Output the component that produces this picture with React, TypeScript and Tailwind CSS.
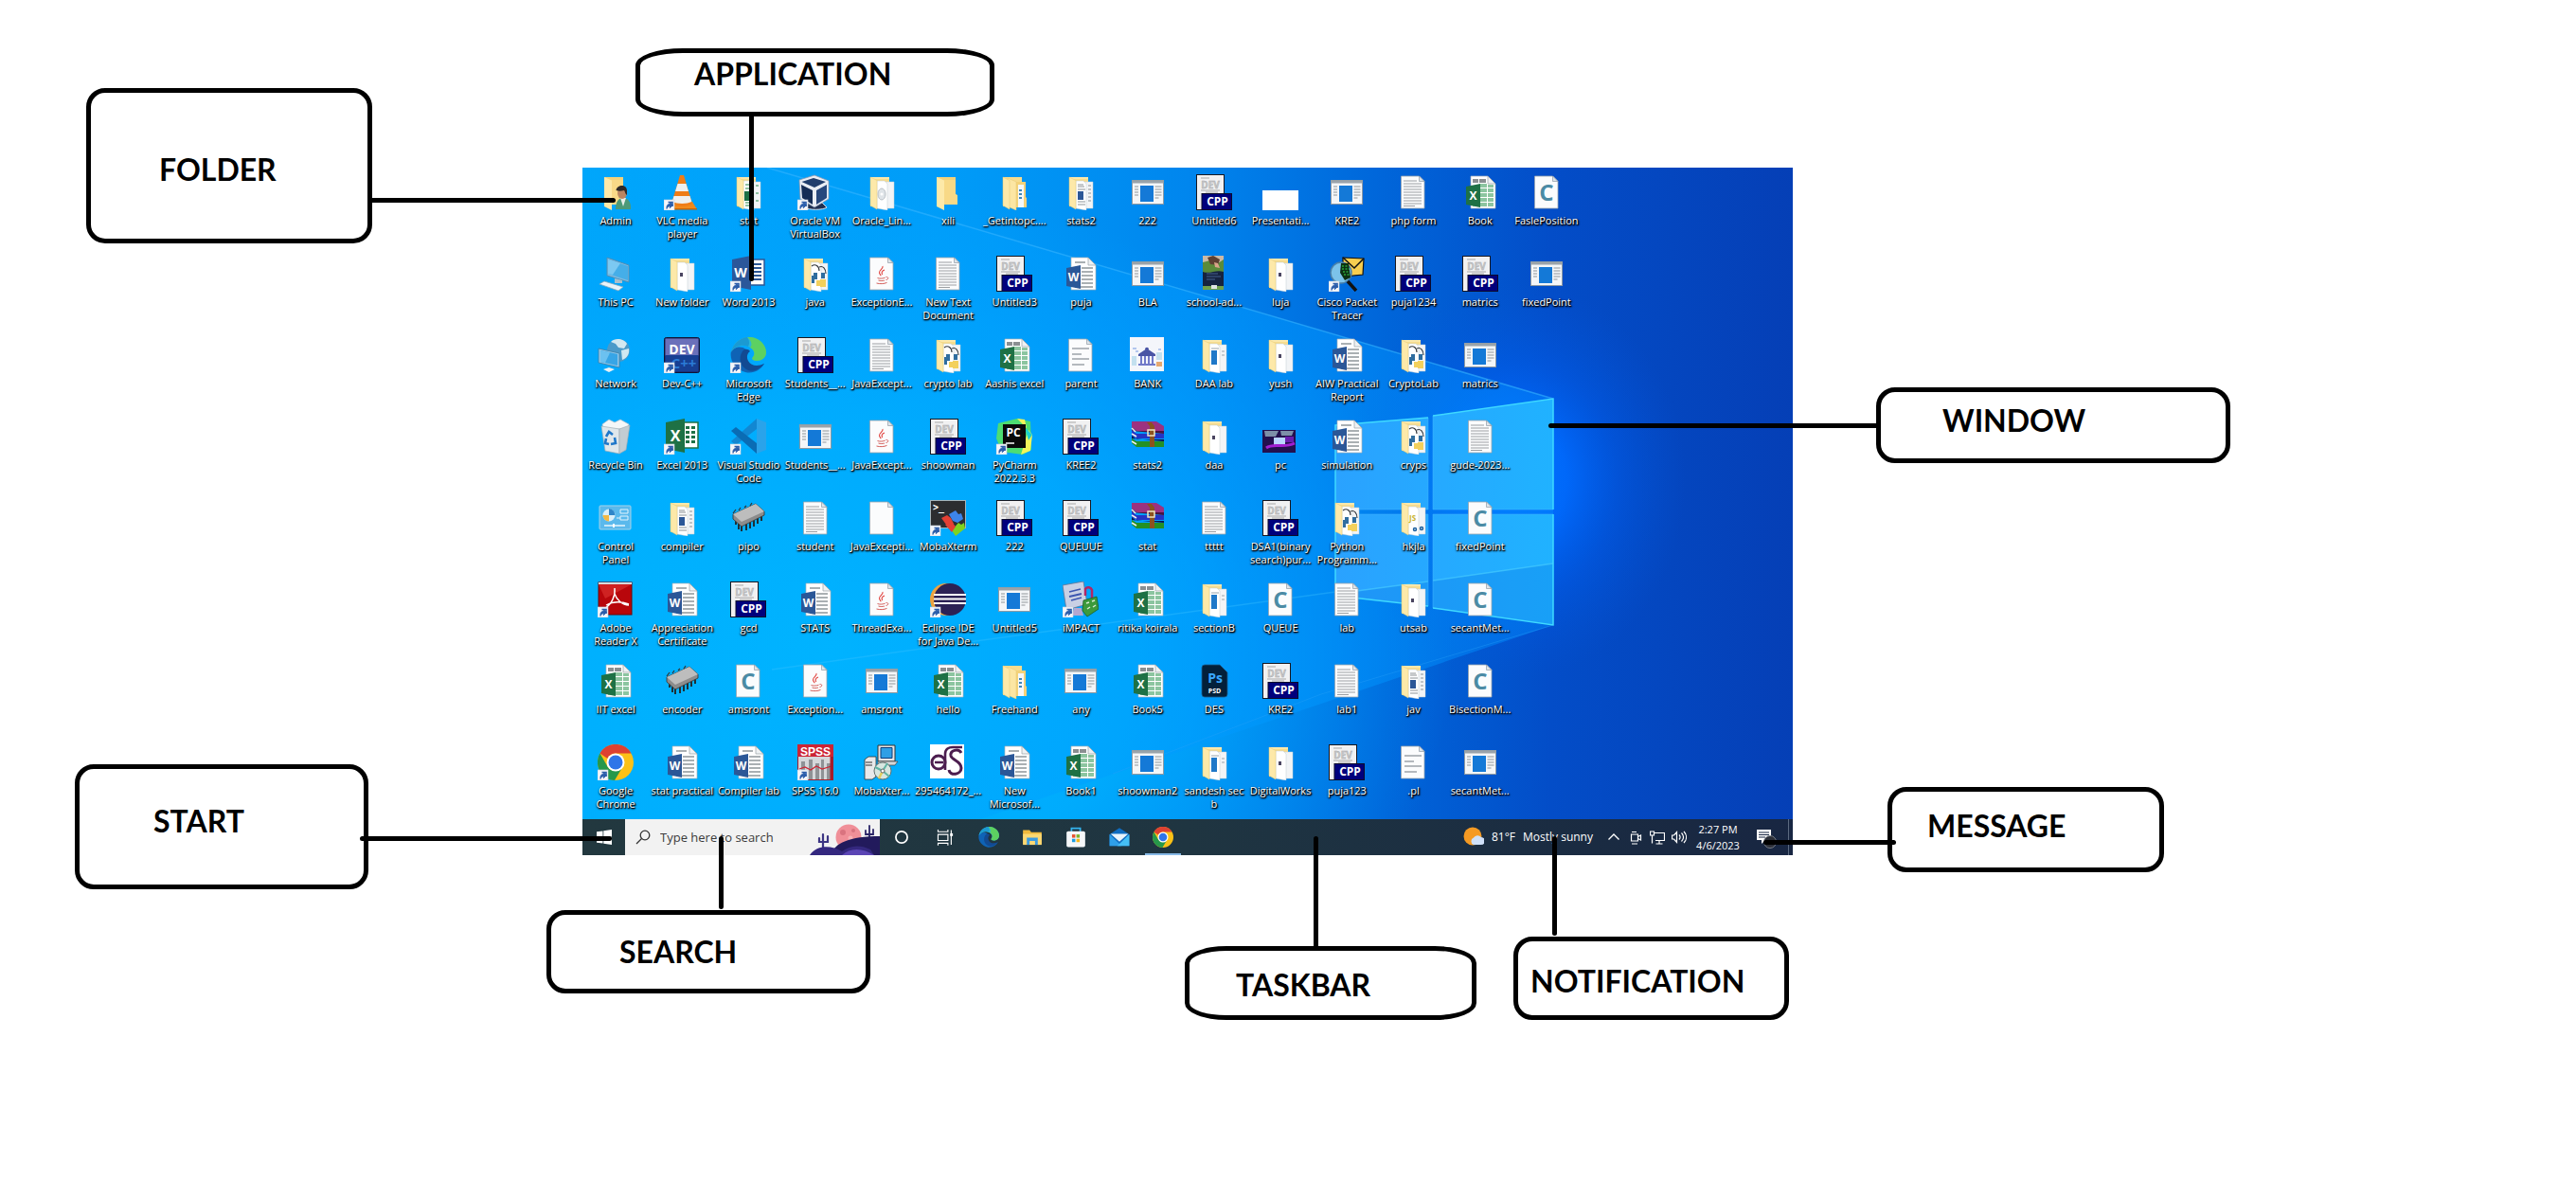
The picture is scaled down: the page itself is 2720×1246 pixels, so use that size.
import type { ReactNode } from "react";

/* ---------- desktop icons, all drawn on a 38 x 38 board ---------- */

const Shortcut = () => (
  <g>
    <rect x="0" y="27" width="11" height="11" fill="#f4f6fa" stroke="#c9d2dd" strokeWidth="0.6" />
    <path d="M3 36.5c-.6-3.200.8-5 3.300-5.300v-2l3.300 3.300-3.300 3.200v-2c-1.600 0-2.700.9-3.300 2.800z" fill="#2a5caa" stroke="#2a5caa" strokeWidth="0.8" />
    <path d="M4.500 29.500h4.500v4.500" fill="none" stroke="#2a5caa" strokeWidth="1.600" />
  </g>
);

const Page = ({ fill = "#fbfcfd" }: { fill?: string }) => (
  <g>
    <path d="M6.500 2h19l5.500 5.500V36H6.500z" fill={fill} stroke="#9aa5ad" strokeWidth="0.8" />
    <path d="M25.500 2v5.500H31z" fill="#dfe5ea" stroke="#9aa5ad" strokeWidth="0.8" />
  </g>
);

const TextDoc = () => (
  <g>
    <Page />
    <path d="M9 7h14M9 10h19M9 13h19M9 16h19M9 19h19M9 22h19M9 25h19M9 28h19M9 31h19M9 33.500h12" stroke="#9c9fa3" strokeWidth="1" />
  </g>
);

const SparseDoc = () => (
  <g>
    <Page />
    <path d="M10 12h18M10 18h10M10 23h18M10 29h13" stroke="#b4b9be" strokeWidth="1.800" />
  </g>
);

const JavaDoc = () => (
  <g>
    <Page />
    <path d="M20 11c1 3-4 4-3.500 7 .2 1.400 1.500 2 1.500 3.200M22 15c-3 1.200-3.500 3-2.300 5" fill="none" stroke="#e0403c" strokeWidth="1.100" />
    <path d="M14.500 23.500c2 .8 5.500.8 8-.3M15.500 26c2 .7 4.500.7 6.500 0M13.500 29c3.500 1 8 .8 11-.6M23.500 22.500c3-.5 3 2.600 0 3" fill="none" stroke="#d4605c" strokeWidth="1" />
  </g>
);

const CDoc = () => (
  <g>
    <Page />
    <text x="19" y="28" textAnchor="middle" fontSize="24" fontWeight="700" fontFamily="Open Sans, sans-serif" fill="#4b8ba5">C</text>
  </g>
);

const OfficePage = () => (
  <g>
    <path d="M9 2h18l8 8v26H9z" fill="#fff" stroke="#a9b2b8" strokeWidth="0.7" />
    <path d="M27 2v8h8z" fill="#eef1f3" stroke="#98a2a8" strokeWidth="0.7" />
  </g>
);

const WordDoc = () => (
  <g>
    <OfficePage />
    <path d="M13 7h11M20 13h12M20 17h12M20 21h12M20 25h12M20 29h12M13 33h19" stroke="#8f969b" strokeWidth="1.500" />
    <path d="M4 13l15-3v25L4 32z" fill="#2b5797" />
    <text x="11.500" y="27" textAnchor="middle" fontSize="12" fontWeight="700" fontFamily="Open Sans, sans-serif" fill="#fff">W</text>
  </g>
);

const ExcelDoc = () => (
  <g>
    <OfficePage />
    <path d="M11 5h6v4h-6zM18 5h7v4h-7z" fill="#8a8f92" />
    <path d="M19 10h7v4h-7zM27 11h6v3h-6zM19 15h7v4h-7zM27 15h6v4h-6zM19 20h7v4h-7zM27 20h6v4h-6zM19 25h7v4h-7zM27 25h6v4h-6zM11 30h7v4h-7zM19 30h7v4h-7zM27 30h6v4h-6z" fill="#8cc5a0" />
    <path d="M4 13l15-3v25L4 32z" fill="#1e7145" />
    <text x="11.500" y="27" textAnchor="middle" fontSize="12" fontWeight="700" fontFamily="Open Sans, sans-serif" fill="#fff">X</text>
  </g>
);

const FolderBack = () => (
  <g>
    <path d="M7 3h20v31H7z" fill="#f6dc8e" />
    <path d="M7 3h20v2H7z" fill="#fae8ac" />
  </g>
);
const FolderFlap = () => <path d="M7 3l7 3.500V37l-7-4z" fill="#fde9a9" stroke="#e6c875" strokeWidth="0.500" />;

const Folder = ({ children }: { children?: ReactNode }) => (
  <g>
    <FolderBack />
    <path d="M20 8h12v28H20z" fill="#f2f4f6" stroke="#c3ccd2" strokeWidth="0.500" />
    <path d="M14 7h8l3 3v28l-11-2z" fill="#fff" stroke="#c3ccd2" strokeWidth="0.500" />
    {children}
    <FolderFlap />
  </g>
);
const FolderDot = () => <Folder><path d="M17 18h3v4h-3z" fill="#4a4560" /></Folder>;
const FolderDocs = () => <Folder><path d="M16 11h6M16 13h7M16 16h8M16 29h8M16 32h8M27 12h3M27 16h3M27 20h3M27 24h3M27 28h3" stroke="#8d9398" strokeWidth="1.200" /><path d="M16 18h6v9h-6z" fill="#2b5797" /></Folder>;
const FolderExcel = () => <Folder><path d="M16 11h7M16 15h7M16 30h7M16 33h7M27 12h3M27 20h3M27 28h3" stroke="#6fae85" strokeWidth="1.500" /><path d="M15 18h7v10h-7z" fill="#1e7145" /></Folder>;
const FolderDisc = () => <Folder><ellipse cx="19" cy="21" rx="4" ry="6" fill="#dfe4e8" stroke="#b8bfc5" /><circle cx="19" cy="21" r="1.500" fill="#fff" /></Folder>;
const FolderWindow = () => <Folder><path d="M16 14h6v15h-6z" fill="#1f78c8" /><path d="M16 12h8M27 15h3M27 19h3" stroke="#9aa3ab" strokeWidth="1.200" /></Folder>;
const FolderPython = () => (
  <Folder>
    <path d="M15 11c4-3 8 0 8 5M23 12c4-2 7 2 7 7" fill="none" stroke="#30353a" strokeWidth="1.100" />
    <path d="M17 18h4v7h-3v4h-3v-8h2zM25 18h4v6h-4z" fill="#2f6d9f" />
    <path d="M20 26h4v6h-4zM24 25h6v8h-6z" fill="#f3d05c" />
  </Folder>
);
const FolderScript = () => (
  <Folder>
    <text x="15" y="22" fontSize="8" fontWeight="700" fontFamily="Open Sans, sans-serif" fill="#c9b32c">JS</text>
    <circle cx="21" cy="31" r="1.500" fill="none" stroke="#1c5f9e" strokeWidth="1.500" />
    <circle cx="28" cy="30" r="1.500" fill="none" stroke="#1c5f9e" strokeWidth="1.500" />
  </Folder>
);
const FolderPlain = () => (
  <g>
    <path d="M7 3h20v18l2 1v10H7z" fill="#f3d27a" />
    <path d="M7 3l8 3.500V38l-8-4z" fill="#fde9a9" />
    <path d="M15 6h12v15l2 2v9H15z" fill="#f8d987" />
  </g>
);
const FolderStack = () => (
  <g>
    <path d="M7 3h20v31H7z" fill="#f6dc8e" />
    <path d="M19 8h12v16l1 1v10H19z" fill="#f3d27a" />
    <path d="M23 11h6v24h-6z" fill="#f4f8fa" />
    <path d="M24 17h3M24 21h3M24 25h3" stroke="#3f86b8" strokeWidth="2" />
    <path d="M12 4l9 4v30l-9-4z" fill="#fce6a3" stroke="#e6c875" strokeWidth="0.500" />
    <FolderFlap />
  </g>
);

const UserFolder = () => (
  <g>
    <FolderPlain />
    <path d="M19 37c0-8 3-12 8-12s8 4 8 10v2z" fill="#4d9a78" />
    <path d="M24 25l3 9 3-9z" fill="#e8eee9" />
    <ellipse cx="26" cy="20" rx="5" ry="6" fill="#b98563" />
    <path d="M19.500 17c1-6 11-7 11.500 0v5c-2-1-2-4-3-5-3 1-6 1-8.500 0z" fill="#2e2a28" />
  </g>
);

const ExeWindow = () => (
  <g>
    <rect x="2.500" y="6.500" width="33" height="25" fill="#f4f6f8" stroke="#8f9aa3" />
    <rect x="2.500" y="6.500" width="33" height="3" fill="#9aa3aa" />
    <rect x="11" y="12" width="14" height="17" fill="#1479d7" />
    <path d="M5 13h4M5 16h4M5 19h4M5 22h4M26.500 13h7M26.500 16h7M26.500 19h7M26.500 22h7M26.500 25h4" stroke="#8f959a" strokeWidth="1.100" />
  </g>
);

const CppDoc = () => (
  <g>
    <rect x="0.500" y="0.500" width="29" height="37" fill="#f1f1f2" stroke="#17171f" />
    <path d="M5 4h9M5 17h20M10 19h13M12 21h6" stroke="#a9a9a9" strokeWidth="1" />
    <text x="15" y="15" textAnchor="middle" fontSize="10" fontWeight="700" fontFamily="Open Sans, sans-serif" fill="#c9cacb" stroke="#a2a2a4" strokeWidth="0.400">DEV</text>
    <rect x="6" y="20.500" width="31.500" height="17" fill="#00007c" stroke="#0b0b2c" />
    <text x="22.500" y="33" textAnchor="middle" fontSize="12" fontWeight="700" fontFamily="Open Sans, sans-serif" fill="#fff">CPP</text>
  </g>
);

const Vlc = () => (
  <g>
    <path d="M5 29h25l5 8H2z" fill="#f08a1c" />
    <path d="M2 36h33v1.500H2z" fill="#c96508" />
    <path d="M17 1h4l9 30c-5 4-17 4-22 0z" fill="#ef7d17" />
    <path d="M14.500 10h9l2.500 8H12zM10.500 23h17l1.800 6c-5 2.500-15 2.500-20.500 0z" fill="#eef0f0" />
    <Shortcut />
  </g>
);

const VirtualBox = () => (
  <g>
    <path d="M12 30h14l5 5c-4 3-19 3-24 0z" fill="#1f2f52" stroke="#dce2ec" strokeWidth="1" />
    <path d="M2 6L18 1l15 6v19L18 35 3 26z" fill="#e9edf4" stroke="#8b97ae" strokeWidth="0.800" />
    <path d="M4.500 8L17 4l13 4-12 6z" fill="#203d6c" />
    <path d="M4 11l12 6v15L5 25z" fill="#152c55" />
    <path d="M31 11l-11 6v15l11-7z" fill="#27477c" />
    <Shortcut />
  </g>
);

const ThisPc = () => (
  <g>
    <path d="M10 2l23 8v18L10 21z" fill="#7fbbe0" stroke="#4d8fb8" strokeWidth="1" />
    <path d="M11 4l21 7v15l-21-7z" fill="#45aee8" />
    <path d="M11 4l13 4-8 12-5-1z" fill="#7cc9f2" />
    <path d="M18 24v5h8v-3z" fill="#a9bfcc" />
    <path d="M2 30l5-3 20 6-5 4z" fill="#eaf3f8" stroke="#86a8bb" strokeWidth="0.800" />
  </g>
);

const Network = () => (
  <g>
    <circle cx="22" cy="14" r="12" fill="#4b9ac9" />
    <path d="M14 5c5-5 14-3 17 2l-3 5-6-1-3-4zM25 14l8-2c1 6-2 10-7 12z" fill="#d2e8f1" />
    <path d="M1 12l22 5v15L1 27z" fill="#8fc6e8" stroke="#3a7da6" strokeWidth="0.800" />
    <path d="M3 14l18 4v12L3 26z" fill="#37a5e6" />
    <path d="M3 14l10 2.500L8 27l-5-1z" fill="#6cc1f0" />
    <path d="M6 34l6-2 6 2-6 3z" fill="#e8f0f4" />
  </g>
);

const RecycleBin = () => (
  <g>
    <path d="M5 6l7-5 6 3 6-3 9 5-1 5H6z" fill="#f5f7f8" stroke="#b7c1c8" strokeWidth="0.700" />
    <path d="M4 8l19 3v26l-15-3z" fill="#dfe7eb" stroke="#a4b0b8" strokeWidth="0.700" />
    <path d="M23 11l11-4-4 26-7 4z" fill="#c2ccd2" stroke="#a4b0b8" strokeWidth="0.700" />
    <path d="M9 19l3-5 4 3M18 20l1 6-5 1M12 27l-4-1 1-5" fill="none" stroke="#1f77c9" strokeWidth="2.600" />
  </g>
);

const NewWord = () => (
  <g>
    <rect x="18" y="4" width="18" height="27" fill="#fff" stroke="#2b5797" strokeWidth="1.500" />
    <path d="M22 9h11M22 13h11M22 17h11M22 21h11M22 25h11" stroke="#2b5797" strokeWidth="1.800" />
    <path d="M2 4l20-4v36L2 32z" fill="#2b579a" />
    <text x="11" y="23" textAnchor="middle" fontSize="14" fontWeight="700" fontFamily="Open Sans, sans-serif" fill="#fff">W</text>
    <Shortcut />
  </g>
);

const NewExcel = () => (
  <g>
    <rect x="18" y="4" width="18" height="27" fill="#fff" stroke="#1e7145" strokeWidth="1.500" />
    <path d="M23 8h4v3h-4zM29 8h4v3h-4zM23 13h4v3h-4zM29 13h4v3h-4zM23 18h4v3h-4zM29 18h4v3h-4zM23 23h4v3h-4zM29 23h4v3h-4z" fill="#1e7145" />
    <path d="M2 4l20-4v36L2 32z" fill="#1e7145" />
    <text x="12" y="24" textAnchor="middle" fontSize="16" fontWeight="700" fontFamily="Open Sans, sans-serif" fill="#fff">X</text>
    <Shortcut />
  </g>
);

const DevCpp = () => (
  <g>
    <rect x="0.500" y="0.500" width="37" height="37" rx="2" fill="#16235f" stroke="#101436" />
    <rect x="1.500" y="1.500" width="35" height="18" fill="#6a70ba" />
    <rect x="1.500" y="19" width="35" height="17.500" fill="#173f93" />
    <text x="19" y="18" textAnchor="middle" fontSize="14" fontWeight="700" fontFamily="Open Sans, sans-serif" fill="#fff">DEV</text>
    <text x="21" y="33" textAnchor="middle" fontSize="15" fontWeight="700" fontFamily="Open Sans, sans-serif" fill="#2b7bd6">C++</text>
    <Shortcut />
  </g>
);

const EdgeMark = () => (
  <g>
    <path d="M36 28C32 35 24 39 16 37 5 34-1 24 1 15 4 10 12 9 17 13c-4 2-6 7-4 12 3 7 13 9 23 3z" fill="#0f63b5" />
    <path d="M13 15c-5 7-2 17 6 20 6 2 12-1 17-7-6 3-14 3-17-3-2-4-1-8 2-10-2-3-6-3-8 0z" fill="#124a92" />
    <path d="M1 16C3 6 11 0 20 0c10 0 18 8 18 16 0 6-5 9-10 9-4 0-6-2-4-4 4-5-2-12-10-12C8 9 3 12 1 16z" fill="#2bb7d6" />
    <path d="M18 0c11-1 20 7 20 16 0 6-5 9-10 9-4 0-6-2-4-4 3-4 1-8-3-10C24 8 22 3 18 0z" fill="#66d64c" opacity="0.850" />
    <path d="M1 16C3 7 10 1 18 0c2 3 3 6 1 10C13 7 5 9 1 16z" fill="#1b9ad2" />
  </g>
);
const EdgeIcon = () => <g><EdgeMark /><Shortcut /></g>;

const VsCode = () => (
  <g>
    <path d="M28 0l10 4v29l-10 4z" fill="#2aa3ea" />
    <path d="M28 0v11L6 28l-5-4z" fill="#1287d2" />
    <path d="M28 37V26L6 9l-5 4z" fill="#0a6cb4" />
    <Shortcut />
  </g>
);

const PyCharm = () => (
  <g>
    <path d="M2 5L22 0l14 3 1 30-9 5-22-3-6-14z" fill="#4ddd72" />
    <path d="M22 0l8 1 2 9zM34 12l4 5-2 17-10 4z" fill="#f2f55a" />
    <path d="M30 9l8 8-4 6z" fill="#1bd0d0" />
    <rect x="7" y="6" width="24" height="25" fill="#0a0a0a" />
    <text x="18" y="19" textAnchor="middle" fontSize="12" fontWeight="700" fontFamily="Open Sans, sans-serif" fill="#fff">PC</text>
    <path d="M10 26h9" stroke="#fff" strokeWidth="1.500" />
    <Shortcut />
  </g>
);

const WinRar = () => (
  <g>
    <path d="M2 3h26l8 5v5H7L2 9z" fill="#9c3280" />
    <path d="M2 9l5 4h29v3L2 13z" fill="#4a1440" />
    <path d="M2 12l5 4h29v5H7l-5-3z" fill="#2434c4" />
    <path d="M2 18l5 4h29v2L2 21z" fill="#0c1350" />
    <path d="M2 21l5 3h29v6H7l-5-4z" fill="#249024" />
    <path d="M2 10l4 4M2 16l5 3M2 24l5 3" stroke="#eee" strokeWidth="1.500" />
    <path d="M18 4h5l3 4v22h-5V8z" fill="#8c5220" />
    <rect x="19" y="12" width="7" height="6" fill="none" stroke="#f0e6c0" strokeWidth="1.500" />
  </g>
);

const ControlPanel = () => (
  <g>
    <rect x="2" y="6" width="33" height="25" rx="1" fill="#5ab9ec" stroke="#a5d3ea" />
    <circle cx="12" cy="16" r="6.500" fill="#d9effa" />
    <path d="M12 16V9a7 7 0 0 1 6.500 7z" fill="#2f86c9" />
    <path d="M12 16h-6.500A6.500 6.500 0 0 0 12 22.500z" fill="#f2b844" />
    <path d="M24 10h8v4h-8zM24 17h8v4h-8zM20 19h4" stroke="#e2f4fd" strokeWidth="1" fill="none" />
    <path d="M7 27h22" stroke="#e7f6fd" strokeWidth="1.500" />
    <path d="M17 25v4" stroke="#fff" strokeWidth="2" />
  </g>
);

const Chip = () => (
  <g>
    <path d="M6 21v5M9 25v6M12 27v6M17 25v7M21 23v7M25 21v7M29 18v7M33 15v7" stroke="#222" strokeWidth="1.800" />
    <path d="M3 15L27 4l9 8v4L12 28l-9-8z" fill="#8c8c8c" stroke="#333" strokeWidth="0.800" />
    <path d="M3 15L27 4l9 8-24 11z" fill="#bdbdbd" />
    <path d="M3 14l3-4M9 11l2-3M15 8l2-2M21 6l2-3" stroke="#333" strokeWidth="1.200" />
  </g>
);

const MobaXterm = () => (
  <g>
    <rect x="0.500" y="0.500" width="37" height="29" fill="#2c2d30" stroke="#a7b4ba" />
    <text x="3" y="11" fontSize="10" fontWeight="700" fontFamily="DejaVu Sans Mono, monospace" fill="#fff">&gt;_</text>
    <path d="M12 19l6-3 4 3 3 6-5 5z" fill="#e44034" />
    <path d="M20 15l7-4 3 4 3-1 2 6-6 4-5-2z" fill="#3d84ea" />
    <path d="M23 32l7-8 3 2 3-2 1 6-10 8z" fill="#7fd320" />
    <path d="M16 26l7-3 4 5-4 6z" fill="#e44034" />
    <Shortcut />
  </g>
);

const Adobe = () => (
  <g>
    <rect x="1" y="1" width="35" height="34" fill="#b8060b" stroke="#6f0407" />
    <path d="M1 1h35v2H1z" fill="#d9dcde" />
    <path d="M1 3h35L8 18z" fill="#cf2222" />
    <path d="M18 7c1 8-3 17-11 22M18 13c2 6 8 12 15 12M9 25c7-4 16-4 24-1" fill="none" stroke="#fff" strokeWidth="1.400" />
    <Shortcut />
  </g>
);

const Eclipse = () => (
  <g>
    <circle cx="17" cy="19" r="17" fill="#eda23f" />
    <circle cx="21" cy="19" r="17" fill="#2c2255" />
    <path d="M4 14h34M4 18.500h34M4 23h34" stroke="#fff" strokeWidth="2.200" />
    <Shortcut />
  </g>
);

const Impact = () => (
  <g>
    <path d="M0 4L22 0l4 24-22 6z" fill="#c9d0e4" stroke="#6a7290" strokeWidth="0.800" />
    <path d="M7 11l12-3M7 16l13-3M9 20l11-3" stroke="#3c56b0" strokeWidth="1.800" />
    <path d="M12 28h8l2 8H10z" fill="#b4a7d0" />
    <path d="M24 15V8c2-3 6-2 7 1v10" fill="none" stroke="#b22666" strokeWidth="2.500" />
    <path d="M22 20l14-4 2 13-12 8-5-6z" fill="#3c9a3c" stroke="#1d5f23" strokeWidth="0.800" />
    <path d="M25 23l3-1M31 21l3-1M26 29l3-2M32 27l3-2" stroke="#d9ecd2" strokeWidth="1.500" />
    <Shortcut />
  </g>
);

const ChromeMark = () => (
  <g>
    <circle cx="19" cy="19" r="19" fill="#fbc116" />
    <path d="M2.500 9.500A19 19 0 0 1 35.500 9.500H19a9.500 9.500 0 0 0-8.500 5.500z" fill="#dd4132" />
    <path d="M2.500 9.500A19 19 0 0 0 18 38l8-13.500a9.500 9.500 0 0 1-15.500-1z" fill="#26984a" />
    <circle cx="19" cy="19" r="9.500" fill="#fff" />
    <circle cx="19" cy="19" r="7.500" fill="#2f75e8" />
  </g>
);
const Chrome = () => <g><ChromeMark /><Shortcut /></g>;

const Psd = () => (
  <g>
    <path d="M9 2h16l8 8v23a3 3 0 0 1-3 3H9a3 3 0 0 1-3-3V5a3 3 0 0 1 3-3z" fill="#03203a" stroke="#1b5c8e" strokeWidth="0.800" />
    <text x="20" y="21" textAnchor="middle" fontSize="14" fontWeight="700" fontFamily="Open Sans, sans-serif" fill="#39a8ff">Ps</text>
    <text x="19.500" y="32" textAnchor="middle" fontSize="7" fontWeight="700" fontFamily="Open Sans, sans-serif" fill="#fff">PSD</text>
  </g>
);

const Spss = () => (
  <g>
    <rect x="0.500" y="0.500" width="37" height="37" fill="#d5d7da" stroke="#a51c2c" />
    <rect x="0" y="0" width="38" height="13" fill="#cc2434" />
    <text x="19" y="11.500" textAnchor="middle" fontSize="12" fontWeight="700" fontFamily="Liberation Sans, sans-serif" fill="#fff">SPSS</text>
    <path d="M4 18h4v19H4zM12 16h4v21h-4zM19 20h4v17h-4zM25 16h3v21h-3zM31 20h4v17h-4z" fill="#8f9296" />
    <path d="M2 26l6-2 6 3 6-4 6 3 10-3" fill="none" stroke="#cc2434" strokeWidth="1.300" />
    <path d="M36 13v25" stroke="#a51c2c" strokeWidth="3" />
    <Shortcut />
  </g>
);

const Installer = () => (
  <g>
    <path d="M15 1h18v17H15z" fill="#e4e5e7" stroke="#333" strokeWidth="1" />
    <path d="M18 3.500h12v11H18z" fill="#2f9fe5" stroke="#0d3f7d" />
    <path d="M15 18h21l-3 4H15z" fill="#d5d7d9" stroke="#444" strokeWidth="0.700" />
    <path d="M1 16l4-3h8v21l-4 3H1z" fill="#e8e9ea" stroke="#333" strokeWidth="0.800" />
    <path d="M2 19h7M2 22h7" stroke="#333" strokeWidth="1.200" />
    <circle cx="20" cy="28" r="9" fill="#d8e6e0" stroke="#62716f" />
    <path d="M20 28l-8-4M20 28l5-8M20 28l7 6" stroke="#5eb4a4" strokeWidth="2" />
    <path d="M20 28l-4 8" stroke="#e3cf5c" strokeWidth="2.500" />
    <circle cx="20" cy="28" r="2" fill="#fff" stroke="#666" />
  </g>
);

const AsLogo = () => (
  <g>
    <rect x="0" y="0" width="36" height="36" fill="#fff" />
    <circle cx="9" cy="19" r="7" fill="none" stroke="#4c1d4f" strokeWidth="3" />
    <path d="M5 19h9M16 27V10c0-5 4-7 8-7h10" fill="none" stroke="#4c1d4f" strokeWidth="2.600" />
    <path d="M33 9c-3-5-12-3-11 3 1 5 11 5 11 13 0 7-12 9-13 2" fill="none" stroke="#4c1d4f" strokeWidth="3" />
  </g>
);

const Slide = () => <rect x="0" y="17" width="38" height="21" fill="#fff" />;

const SchoolPoster = () => (
  <g>
    <rect x="7" y="0" width="22" height="36" fill="#16233f" />
    <path d="M7 4c6-6 16-4 22 0v13c-8-3-14 3-22 0z" fill="#5a8b3a" />
    <path d="M7 0h22v4l-6 4-8-3-8 2z" fill="#cbb9a6" />
    <path d="M12 2l6-2 7 4-2 6-8-1z" fill="#5d4032" />
    <path d="M19 7l4 1 2 5-5-1z" fill="#d9a58a" />
    <path d="M11 19h12M11 22h15M11 25h9" stroke="#45618f" />
    <path d="M7 32h22v4H7z" fill="#6fa04a" />
    <path d="M16 31h6v4h-6z" fill="#dfe6e2" />
  </g>
);

const Cisco = () => (
  <g>
    <path d="M15 2l22 1-1 17-21 2z" fill="#f7ce50" stroke="#111" strokeWidth="1.200" />
    <path d="M15 2l12 11L37 3" fill="none" stroke="#111" strokeWidth="1.500" />
    <circle cx="13" cy="18" r="11" fill="#7cc3ea" stroke="#4b81a8" strokeWidth="1.500" />
    <path d="M13 8h8l2 15-6 3-5-8z" fill="#0c3012" />
    <path d="M14 11h7M14 14h8M15 17h7M16 20h6" stroke="#37e04a" strokeDasharray="2 1.500" />
    <path d="M20 27l9 10" stroke="#111" strokeWidth="3.500" />
    <Shortcut />
  </g>
);

const Bank = () => (
  <g>
    <rect x="0" y="0" width="36" height="36" fill="#f4f6fb" />
    <path d="M9 18l9-6 9 6v2H9zM16 13c0-3 4-3 4 0z" fill="#4a55a5" />
    <path d="M11 20h2v8h-2zM15 20h2v8h-2zM19 20h2v8h-2zM23 20h2v8h-2zM9 28h18v2H9z" fill="#7079c9" />
    <path d="M2 20h5v10H2zM28 16h6v8h-6z" fill="#c3e0ef" />
    <path d="M28 26h6v5h-6z" fill="#e6a870" />
    <path d="M3 12h4M6 15h3M30 13h3" stroke="#9db7ea" strokeWidth="1.500" />
  </g>
);

const PcPhoto = () => (
  <g>
    <rect x="0" y="12" width="35" height="24" fill="#23104e" />
    <path d="M2 13h15l-3 6H3zM19 13h14l-2 5H20z" fill="#7d8fa8" />
    <path d="M12 20h12v8H12z" fill="#b9d4ff" />
    <path d="M4 31c8-6 18 1 30-5" fill="none" stroke="#a01fd2" strokeWidth="3" />
    <path d="M24 19h9v6h-9z" fill="#6a1cae" />
  </g>
);

const ICONS = {
  user: UserFolder, vlc: Vlc, folderExcel: FolderExcel, vbox: VirtualBox, folderDisc: FolderDisc,
  folder: FolderPlain, folderStack: FolderStack, folderDocs: FolderDocs, exe: ExeWindow, cpp: CppDoc,
  slide: Slide, text: TextDoc, excel: ExcelDoc, c: CDoc, pc: ThisPc, folderDot: FolderDot, wordApp: NewWord,
  folderPy: FolderPython, java: JavaDoc, word: WordDoc, poster: SchoolPoster, cisco: Cisco, network: Network,
  dev: DevCpp, edge: EdgeIcon, sparse: SparseDoc, bank: Bank, folderWin: FolderWindow, bin: RecycleBin,
  excelApp: NewExcel, code: VsCode, pycharm: PyCharm, rar: WinRar, photo: PcPhoto, control: ControlPanel,
  chip: Chip, blank: Page, moba: MobaXterm, adobe: Adobe, eclipse: Eclipse, impact: Impact, chrome: Chrome,
  psd: Psd, spss: Spss, installer: Installer, as: AsLogo, folderJs: FolderScript,
};

type IconName = keyof typeof ICONS;

const ROWS: [IconName, string][][] = [
  [["user", "Admin"], ["vlc", "VLC media\nplayer"], ["folderExcel", "stat"], ["vbox", "Oracle VM\nVirtualBox"], ["folderDisc", "Oracle_Lin..."], ["folder", "xili"], ["folderStack", "_Getintopc...."], ["folderDocs", "stats2"], ["exe", "222"], ["cpp", "Untitled6"], ["slide", "Presentati..."], ["exe", "KRE2"], ["text", "php form"], ["excel", "Book"], ["c", "FaslePosition"]],
  [["pc", "This PC"], ["folderDot", "New folder"], ["wordApp", "Word 2013"], ["folderPy", "java"], ["java", "ExceptionE..."], ["text", "New Text\nDocument"], ["cpp", "Untitled3"], ["word", "puja"], ["exe", "BLA"], ["poster", "school-ad..."], ["folderDot", "luja"], ["cisco", "Cisco Packet\nTracer"], ["cpp", "puja1234"], ["cpp", "matrics"], ["exe", "fixedPoint"]],
  [["network", "Network"], ["dev", "Dev-C++"], ["edge", "Microsoft\nEdge"], ["cpp", "Students__..."], ["text", "JavaExcept..."], ["folderPy", "crypto lab"], ["excel", "Aashis excel"], ["sparse", "parent"], ["bank", "BANK"], ["folderWin", "DAA lab"], ["folderDot", "yush"], ["word", "AIW Practical\nReport"], ["folderPy", "CryptoLab"], ["exe", "matrics"]],
  [["bin", "Recycle Bin"], ["excelApp", "Excel 2013"], ["code", "Visual Studio\nCode"], ["exe", "Students__..."], ["java", "JavaExcept..."], ["cpp", "shoowman"], ["pycharm", "PyCharm\n2022.3.3"], ["cpp", "KREE2"], ["rar", "stats2"], ["folderDot", "daa"], ["photo", "pc"], ["word", "simulation"], ["folderPy", "cryps"], ["text", "gude-2023..."]],
  [["control", "Control\nPanel"], ["folderDocs", "compiler"], ["chip", "pipo"], ["text", "student"], ["blank", "JavaExcepti..."], ["moba", "MobaXterm"], ["cpp", "222"], ["cpp", "QUEUUE"], ["rar", "stat"], ["text", "ttttt"], ["cpp", "DSA1(binary\nsearch)pur..."], ["folderPy", "Python\nProgramm..."], ["folderJs", "hkjla"], ["c", "fixedPoint"]],
  [["adobe", "Adobe\nReader X"], ["word", "Appreciation\nCertificate"], ["cpp", "gcd"], ["word", "STATS"], ["java", "ThreadExa..."], ["eclipse", "Eclipse IDE\nfor Java De..."], ["exe", "Untitled5"], ["impact", "iMPACT"], ["excel", "ritika koirala"], ["folderWin", "sectionB"], ["c", "QUEUE"], ["text", "lab"], ["folderDot", "utsab"], ["c", "secantMet..."]],
  [["excel", "IIT excel"], ["chip", "encoder"], ["c", "amsront"], ["java", "Exception..."], ["exe", "amsront"], ["excel", "hello"], ["folderStack", "Freehand"], ["exe", "any"], ["excel", "Book5"], ["psd", "DES"], ["cpp", "KRE2"], ["text", "lab1"], ["folderDocs", "jav"], ["c", "BisectionM..."]],
  [["chrome", "Google\nChrome"], ["word", "stat practical"], ["word", "Compiler lab"], ["spss", "SPSS 16.0"], ["installer", "MobaXter..."], ["as", "295464172_..."], ["word", "New\nMicrosof..."], ["excel", "Book1"], ["exe", "shoowman2"], ["folderWin", "sandesh sec\nb"], ["folderDot", "DigitalWorks"], ["cpp", "puja123"], ["sparse", ".pl"], ["exe", "secantMet..."]],
];

const DesktopIcon = ({ icon, label }: { icon: IconName; label: string }) => {
  const Drawing = ICONS[icon];
  return (
    <button type="button" className="flex w-full flex-col items-center gap-1 pt-[7px]">
      <svg viewBox="0 0 38 38" className="size-[38px] shrink-0" aria-hidden="true"><Drawing /></svg>
      <span className="text-center text-[11px] leading-[14px] whitespace-pre text-white [text-shadow:1px_1px_1px_#000,1px_1px_2px_#000,0_1px_2px_#000]">{label}</span>
    </button>
  );
};

/* ---------- wallpaper ---------- */

const Wallpaper = () => (
  <svg viewBox="0 0 1278 688" preserveAspectRatio="none" className="absolute inset-0 size-full" aria-hidden="true">
    <defs>
      <linearGradient id="base" x1="0" y1="0" x2="1" y2="0">
        <stop offset="0" stopColor="#00a6fb" />
        <stop offset="0.3" stopColor="#009cf8" />
        <stop offset="0.5" stopColor="#0086ee" />
        <stop offset="0.66" stopColor="#0066da" />
        <stop offset="0.8" stopColor="#034dc8" />
        <stop offset="1" stopColor="#053fb6" />
      </linearGradient>
      <radialGradient id="cyan" gradientUnits="userSpaceOnUse" cx="0" cy="0" r="1" gradientTransform="translate(260 510) scale(660 500)">
        <stop offset="0" stopColor="#00b8ff" />
        <stop offset="0.5" stopColor="#00b2ff" stopOpacity="0.8" />
        <stop offset="1" stopColor="#00a0ff" stopOpacity="0" />
      </radialGradient>
      <radialGradient id="glow" gradientUnits="userSpaceOnUse" cx="0" cy="0" r="1" gradientTransform="translate(985 330) scale(180 210)">
        <stop offset="0" stopColor="#0076ff" />
        <stop offset="0.3" stopColor="#006bff" stopOpacity="0.9" />
        <stop offset="0.6" stopColor="#005ff0" stopOpacity="0.45" />
        <stop offset="1" stopColor="#0455d8" stopOpacity="0" />
      </radialGradient>
      <linearGradient id="beam" x1="0" y1="0" x2="1" y2="0">
        <stop offset="0" stopColor="#00a8ff" stopOpacity="0.15" />
        <stop offset="0.75" stopColor="#0098ff" stopOpacity="0.75" />
        <stop offset="1" stopColor="#008cff" stopOpacity="0.6" />
      </linearGradient>
      <linearGradient id="pane" x1="0" y1="0" x2="1" y2="0">
        <stop offset="0" stopColor="#2aa2ff" />
        <stop offset="1" stopColor="#20b2ff" />
      </linearGradient>
    </defs>
    <rect width="1278" height="688" fill="url(#base)" />
    <rect width="1278" height="688" fill="url(#cyan)" />
    <rect width="1278" height="688" fill="url(#glow)" />
    <path d="M195 0L1025 244V483L420 688H0V0z" fill="url(#beam)" opacity="0.7" />
    <path d="M195 0L1025 244" stroke="#36b4ff" strokeWidth="1.500" opacity="0.6" />
    <path d="M200 530L415 500L795 448" fill="none" stroke="#3cc4ff" strokeWidth="1.500" opacity="0.35" />
    <path d="M1025 483L780 556L560 640" fill="none" stroke="#2ba4f8" opacity="0.350" />
    <path d="M795 272L893 264V361H795zM898 262L1025 244V361H898zM795 366H893V463L795 452zM898 366H1025V483L898 465z" fill="url(#pane)" />
    <path d="M795 450L893 437V463L795 452zM898 436L1025 418V483L898 465z" fill="#0c7fe8" opacity="0.350" />
    <path d="M795 450L893 437M898 436L1025 418" stroke="#4bd0ff" strokeWidth="1.500" opacity="0.600" />
    <path d="M795 361H893M898 361H1025M795 366H893M898 366H1025M893 264V361M893 366V463M898 262V361M898 366V465" stroke="#45b6ff" opacity="0.500" />
    <path d="M795 452V272L893 264M898 262L1025 244V361M1025 366V483L898 465M893 463L795 452" fill="none" stroke="#3fd9ff" strokeWidth="1.500" />
  </svg>
);

/* ---------- taskbar ---------- */

const APPS: { name: string; active?: boolean; art: ReactNode }[] = [
  { name: "Cortana", art: <circle cx="19" cy="19" r="10.500" fill="none" stroke="#fff" strokeWidth="3" /> },
  { name: "Task View", art: <g><path d="M6 14h18v11H6zM6 5v4h18V5M6 34v-4h18v4M30 6v27" fill="none" stroke="#fff" strokeWidth="2" /><rect x="28" y="12" width="5" height="5" fill="#fff" /></g> },
  { name: "Microsoft Edge", art: <EdgeMark /> },
  { name: "File Explorer", art: <g><path d="M2 6h12l3 4h19v22H2z" fill="#f0b93c" /><path d="M2 13h34v20H2z" fill="#fcd873" /><path d="M9 20h20v13h-5v-7H14v7H9z" fill="#3c9be0" /></g> },
  { name: "Microsoft Store", art: <g><path d="M11 9V3h16v6" fill="none" stroke="#35b4ee" strokeWidth="3" /><rect x="2" y="8" width="34" height="29" rx="3" fill="#f5f7f9" /><path d="M12 14h6v6h-6z" fill="#e8512f" /><path d="M20 14h6v6h-6z" fill="#7db32b" /><path d="M12 22h6v6h-6z" fill="#1b9de2" /><path d="M20 22h6v6h-6z" fill="#f5b71c" /></g> },
  { name: "Mail", art: <g><path d="M1 14L19 2l18 12v21H1z" fill="#0f6cc0" /><path d="M3 13h32L19 27z" fill="#e8f3fb" /><path d="M1 14l22 21H1z" fill="#2f9fe8" /><path d="M37 14L15 35h22z" fill="#45bff5" /></g> },
  { name: "Google Chrome", active: true, art: <ChromeMark /> },
];

const SearchArt = () => (
  <svg viewBox="0 0 74 38" className="h-full w-[74px] shrink-0" aria-hidden="true">
    <circle cx="41" cy="19" r="13.500" fill="#f08f98" />
    <circle cx="35" cy="14" r="3" fill="#d9737f" /><circle cx="46" cy="12" r="2" fill="#d9737f" /><circle cx="43" cy="20" r="2.500" fill="#f8b0b4" />
    <path d="M14 16v15M10 20v4h4M19 18v6h-5" fill="none" stroke="#3c3583" strokeWidth="2.200" strokeLinecap="round" />
    <path d="M63 7v14M59 12v4h4M67 11v5h-4" fill="none" stroke="#2a2467" strokeWidth="1.800" strokeLinecap="round" />
    <path d="M22 38c4-13 20-20 52-20v20z" fill="#221a5c" />
    <path d="M0 38c8-12 24-10 34-4 8-6 18-8 30-2l4 6z" fill="#34287f" />
    <path d="M34 38c8-8 22-8 34 0z" fill="#5b45b5" />
  </svg>
);

const TrayIcon = ({ name, children }: { name: string; children: ReactNode }) => (
  <button type="button" aria-label={name} className="flex h-full w-[23px] items-center justify-center">
    <svg viewBox="0 0 16 16" className="size-4" fill="none" stroke="#fff" strokeWidth="1.200" aria-hidden="true">{children}</svg>
  </button>
);

const Taskbar = () => (
  <footer className="relative flex h-[38px] items-center bg-linear-to-r from-[#22383f] via-[#1f3541] to-[#182642]">
    <button type="button" aria-label="Start" className="flex h-full w-[45px] shrink-0 items-center justify-center">
      <svg viewBox="0 0 16 16" className="size-4" fill="#fff" aria-hidden="true"><path d="M0 2.300l6.500-.9v6.200H0zM7.300 1.300L16 0v7.600H7.300zM0 8.400h6.500v6.200L0 13.700zM7.300 8.400H16V16l-8.700-1.300z" /></svg>
    </button>
    <label className="flex h-full w-[269px] shrink-0 items-center bg-[#f2f2f2] pl-[11px]">
      <svg viewBox="0 0 16 16" className="size-4 shrink-0" fill="none" stroke="#333" strokeWidth="1.300" aria-hidden="true"><circle cx="10" cy="6" r="4.800" /><path d="M6.500 9.500L1 15" /></svg>
      <input type="text" aria-label="Search" placeholder="Type here to search" className="ml-2.5 h-full min-w-0 flex-1 bg-transparent text-[13px] text-[#3b3b3b] outline-none placeholder:text-[#3b3b3b] placeholder:opacity-100" />
      <SearchArt />
    </label>
    <nav className="flex h-full gap-2 pl-1">
      {APPS.map((app) => (
        <button key={app.name} type="button" aria-label={app.name} className={app.active ? "flex h-full w-[38px] items-center justify-center border-b-2 border-[#86b9e6] pt-0.5" : "flex h-full w-[38px] items-center justify-center"}>
          <svg viewBox="0 0 38 38" className="size-[22px]" aria-hidden="true">{app.art}</svg>
        </button>
      ))}
    </nav>
    <div className="ml-auto flex h-full items-center text-white">
      <button type="button" className="mr-2.5 flex h-full items-center gap-2 text-xs whitespace-nowrap">
        <svg viewBox="0 0 22 22" className="size-[22px]" aria-hidden="true">
          <circle cx="10" cy="10" r="9.500" fill="#f59a23" />
          <path d="M11 19a4 4 0 0 1 0-7.500 5 5 0 0 1 8-.5 4 4 0 0 1-.5 8z" fill="#cfe0f8" />
        </svg>
        <span>81°F</span>
        <span>Mostly sunny</span>
      </button>
      <TrayIcon name="Show hidden icons"><path d="M2.500 10.500L8 5l5.500 5.500" strokeWidth="1.400" /></TrayIcon>
      <TrayIcon name="Meet Now"><path d="M3.500 5h7v7h-7zM10.500 7.500l3-1.500v5l-3-1.500M4 2.500h5M4 15h6" /></TrayIcon>
      <TrayIcon name="Network"><path d="M4 3.500h11.500v8H6M0.500 2h4v4h-4zM2.500 6v8.500M10 11.500V15M6.500 15h7" /></TrayIcon>
      <TrayIcon name="Volume"><path d="M0.500 6h2l3-3.500v11L2.500 10h-2zM8 5.500c1.300 1.500 1.300 3.500 0 5M10.500 3.500c2.500 2.700 2.500 6.300 0 9M13 2c3.300 3.600 3.300 8.400 0 12" /></TrayIcon>
      <time className="mx-1.5 w-[48px] text-center text-[11px] leading-[17px] whitespace-nowrap">2:27 PM<br />4/6/2023</time>
      <button type="button" aria-label="Notifications" className="flex h-full w-[44px] items-center justify-center">
        <svg viewBox="0 0 24 24" className="size-6" aria-hidden="true">
          <path d="M1 4h15v11H10l-4 4v-4H1z" fill="#fff" />
          <path d="M3 7h11M3 9.500h11M3 12h7" stroke="#182642" strokeWidth="1.100" />
          <circle cx="15" cy="17" r="6.500" fill="#2c2f38" stroke="#8b9098" strokeWidth="0.800" />
          <text x="15" y="20" textAnchor="middle" fontSize="8" fontFamily="Open Sans, sans-serif" fill="#fff">1</text>
        </svg>
      </button>
      <div className="mr-1 h-full w-px bg-[#5c6a80]" />
    </div>
  </footer>
);

/* ---------- labelled boxes and the lines that tie them to the screen ---------- */

const BOX = "absolute flex border-5 border-black bg-white text-[32px] leading-8 font-bold text-black [font-family:Lato,sans-serif]";

const Callouts = () => (
  <>
    <div className={`${BOX} top-[93px] left-[91px] h-[164px] w-[302px] items-center rounded-[20px] pt-2 pl-[72px]`}>FOLDER</div>
    <div className={`${BOX} top-[51px] left-[671px] h-[72px] w-[379px] items-start rounded-[50px/18px] pt-[6px] pl-[57px]`}>APPLICATION</div>
    <div className={`${BOX} top-[807px] left-[79px] h-[132px] w-[310px] items-start rounded-[20px] pt-[39px] pl-[78px]`}>START</div>
    <div className={`${BOX} top-[961px] left-[577px] h-[88px] w-[342px] items-center rounded-[20px] pl-[72px]`}>SEARCH</div>
    <div className={`${BOX} top-[999px] left-[1251px] h-[78px] w-[308px] items-center rounded-[44px/18px] pt-1 pl-[49px]`}>TASKBAR</div>
    <div className={`${BOX} top-[989px] right-[831px] h-[88px] w-[291px] items-center rounded-[20px] pt-1.5 pl-[13px]`}>NOTIFICATION</div>
    <div className={`${BOX} top-[409px] right-[365px] h-[80px] w-[374px] items-start rounded-[20px] pt-[14px] pl-[65px]`}>WINDOW</div>
    <div className={`${BOX} top-[831px] right-[435px] h-[90px] w-[292px] items-start rounded-[20px] pt-[20px] pl-[37px]`}>MESSAGE</div>

    <div className="absolute top-[209px] left-[391px] h-[5px] w-[259px] rounded-full bg-black" />
    <div className="absolute top-[121px] left-[791px] h-[176px] w-[5px] rounded-full bg-black" />
    <div className="absolute top-[883px] left-[380px] h-[5px] w-[266px] rounded-full bg-black" />
    <div className="absolute top-[883px] left-[759px] h-[77px] w-[5px] rounded-full bg-black" />
    <div className="absolute top-[883px] left-[1387px] h-[118px] w-[5px] rounded-full bg-black" />
    <div className="absolute top-[883px] right-[1076px] h-[105px] w-[5px] rounded-full bg-black" />
    <div className="absolute top-[447px] right-[737px] h-[5px] w-[348px] rounded-full bg-black" />
    <div className="absolute top-[887px] right-[718px] h-[5px] w-[140px] rounded-full bg-black" />
  </>
);

export default function App() {
  return (
    <main className="relative min-h-screen bg-white pt-[177px] pr-[827px] pb-[169px] pl-[615px]">
      <section aria-label="Desktop" className="[font-family:'Open_Sans',sans-serif]">
        <div className="relative overflow-hidden bg-[#00a6fb]">
          <Wallpaper />
          <div className="relative grid w-[1053px] auto-rows-[86px]">
            {ROWS.map((row, r) => (
              <div key={r} className="grid grid-cols-15">
                {row.map(([icon, label], c) => <DesktopIcon key={c} icon={icon} label={label} />)}
              </div>
            ))}
          </div>
        </div>
        <Taskbar />
      </section>
      <Callouts />
    </main>
  );
}
